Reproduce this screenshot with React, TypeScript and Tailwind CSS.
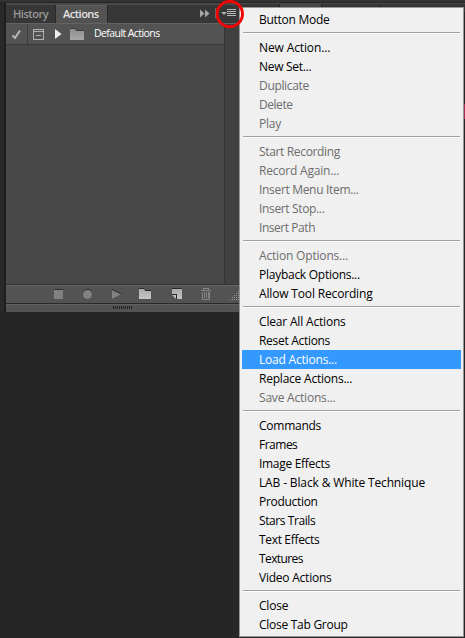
import React from "react";

type Item = { label: string; off?: boolean; active?: boolean; track: string };

const groups: Item[][] = [
  [{ label: "Button Mode", track: "tracking-[-0.27px]" }],
  [
    { label: "New Action...", track: "tracking-[-0.12px]" },
    { label: "New Set...", track: "tracking-[-0.3px]" },
    { label: "Duplicate", off: true, track: "tracking-[-0.33px]" },
    { label: "Delete", off: true, track: "tracking-[-0.45px]" },
    { label: "Play", off: true, track: "tracking-[-0.25px]" },
  ],
  [
    { label: "Start Recording", off: true, track: "tracking-[-0.34px]" },
    { label: "Record Again...", off: true, track: "tracking-[-0.2px]" },
    { label: "Insert Menu Item...", off: true, track: "tracking-[-0.32px]" },
    { label: "Insert Stop...", off: true, track: "tracking-[-0.35px]" },
    { label: "Insert Path", off: true, track: "tracking-[-0.45px]" },
  ],
  [
    { label: "Action Options...", off: true, track: "tracking-[-0.18px]" },
    { label: "Playback Options...", track: "tracking-[-0.26px]" },
    { label: "Allow Tool Recording", track: "tracking-[-0.16px]" },
  ],
  [
    { label: "Clear All Actions", track: "tracking-[-0.18px]" },
    { label: "Reset Actions", track: "tracking-[-0.3px]" },
    { label: "Load Actions...", active: true, track: "tracking-[-0.2px]" },
    { label: "Replace Actions...", track: "tracking-[-0.22px]" },
    { label: "Save Actions...", off: true, track: "tracking-[-0.2px]" },
  ],
  [
    { label: "Commands", track: "tracking-[-0.25px]" },
    { label: "Frames", track: "tracking-[-0.5px]" },
    { label: "Image Effects", track: "tracking-[-0.3px]" },
    { label: "LAB - Black & White Technique", track: "tracking-[-0.14px]" },
    { label: "Production", track: "tracking-[-0.3px]" },
    { label: "Stars Trails", track: "tracking-[-0.42px]" },
    { label: "Text Effects", track: "tracking-[-0.33px]" },
    { label: "Textures", track: "tracking-[-0.6px]" },
    { label: "Video Actions", track: "tracking-[-0.23px]" },
  ],
  [
    { label: "Close", track: "tracking-[-0.2px]" },
    { label: "Close Tab Group", track: "tracking-[-0.27px]" },
  ],
];

function Menu() {
  return (
    <div className="absolute left-[239px] top-[7px] h-[630px] w-[225px] border border-[#979797] bg-[#f0f0f0] px-[2px] pt-[2px] text-[12px] leading-[19px]">
      {groups.map((group, g) => (
        <div key={g}>
          {g > 0 && (
            <div className="flex h-[9px] flex-col px-px pt-[3px]">
              <div className="h-px bg-[#a0a0a0]" />
              <div className="h-px bg-white" />
            </div>
          )}
          {group.map((item) => (
            <div
              key={item.label}
              className={
                "h-[19px] whitespace-nowrap pl-[17px] " +
                item.track +
                (item.active
                  ? " bg-[#3399ff] text-white"
                  : item.off
                    ? " text-[#6d6d6d]"
                    : " text-black")
              }
            >
              {item.label}
            </div>
          ))}
        </div>
      ))}
    </div>
  );
}

function Folder({ className }: { className: string }) {
  return (
    <svg className={className} viewBox="0 0 14 12" shapeRendering="crispEdges">
      <path d="M0 1h5v1h1v1h8v9H0z" fill="url(#folder)" />
      <path d="M0 0h5v1H0zM6 2h8v1H6z" fill="#3a3a3a" />
    </svg>
  );
}

function Header() {
  return (
    <div className="flex h-[18px] bg-[#373737] text-[11px] font-semibold leading-[17px]">
      <div className="w-[50px] border-r border-[#292929] pl-[7px] tracking-[-0.45px] text-[#999999]">History</div>
      <div className="w-[51px] border-t border-[#606060] bg-[#535353] pl-[7px] leading-[15px] tracking-[-0.5px] text-[#e4e4e4]">
        Actions
      </div>
      <div className="flex flex-1 justify-end border-l border-[#292929]">
        <svg className="h-[18px] w-[40px]" viewBox="0 0 40 18">
          <path d="M1 4.5l4.5 4-4.5 4zM6 4.5l4.5 4-4.5 4z" fill="#a6a6a6" />
          <path d="M16.5 3v10" stroke="#696969" />
          <path d="M22 7h6l-3 3z" fill="#b0b0b0" />
          <path d="M28 4.5h9M28 6.5h9M28 8.5h9M28 10.5h9" stroke="#b8b8b8" shapeRendering="crispEdges" />
        </svg>
      </div>
    </div>
  );
}

function ActionRow() {
  return (
    <div className="flex h-[21px] w-[218px] items-center border-b border-[#383838] bg-[#535353]">
      <div className="flex h-full w-[22px] items-center justify-center border-r border-[#3b3b3b]">
        <svg className="h-[11px] w-[11px]" viewBox="0 0 11 11">
          <path d="M1.5 6.5l2.5 2.5 5-7.5" fill="none" stroke="#b9b9b9" strokeWidth="2" />
        </svg>
      </div>
      <svg className="ml-[5px] h-[11px] w-[11px]" viewBox="0 0 11 11" shapeRendering="crispEdges">
        <path d="M.5.5h10v10H.5zM1 2.5h9M3 6.5h5" fill="none" stroke="#b1b1b1" />
      </svg>
      <svg className="ml-[11px] h-[10px] w-[7px]" viewBox="0 0 7 10">
        <path d="M0 0l6.5 5L0 10z" fill="#eeeeee" />
      </svg>
      <Folder className="ml-[8px] h-[12px] w-[14px]" />
      <span className="ml-[10px] whitespace-nowrap text-[10.5px] tracking-[-0.58px] text-white">
        Default Actions
      </span>
    </div>
  );
}

function Footer() {
  return (
    <svg className="block h-[28px] w-[234px]" viewBox="0 0 234 28">
      <g shapeRendering="crispEdges">
        <path d="M0 0h234v28H0z" fill="#535353" />
        <path d="M0 0h234v1H0z" fill="#343434" />
        <path d="M0 1h234v1H0z" fill="#666666" />
        <path d="M0 19h234v1H0z" fill="#292929" />
        <path d="M0 20h234v1H0z" fill="#626262" />
        <path d="M48 6h9v9h-9z" fill="#818181" />
        <path d="M48 5h9v1h-9z" fill="#303030" />
      </g>
      <circle cx="81.5" cy="9.8" r="4.7" fill="#303030" />
      <circle cx="81.5" cy="10.5" r="4.5" fill="#818181" />
      <path d="M106 5l10 5-10 5z" fill="#303030" />
      <path d="M106 6l9 4.5-9 4.5z" fill="#818181" />
      <g shapeRendering="crispEdges">
        <path d="M133 5h5v1h1v1h6v8h-12z" fill="url(#metal)" />
        <path d="M133 4h5v1h-5zM139 6h6v1h-6z" fill="#292929" />
        <path d="M166 5h10v10h-5v-5h-5z" fill="url(#metal)" />
        <path d="M166 4h10v1h-10zM166 10h5v5h-1v-4h-4z" fill="#292929" />
      </g>
      <path d="M166 11l4 4v-4z" fill="#c0c0c0" />
      <path
        d="M195 6.5h10M197.5 6v-1.5h5V6M196.5 8v7h7V8M198.5 8v6M200.5 8v6M202 8v6"
        fill="none"
        stroke="#858585"
        strokeWidth="1"
        shapeRendering="crispEdges"
      />
      <path
        d="M232 7.5h1M230 9.5h1M232 9.5h1M228 11.5h1M230 11.5h1M232 11.5h1M226 13.5h1M228 13.5h1M230 13.5h1M232 13.5h1M224 15.5h1M226 15.5h1M228 15.5h1M230 15.5h1M232 15.5h1"
        stroke="#929292"
        shapeRendering="crispEdges"
      />
      <path d="M107 23.5h20" stroke="#222222" strokeWidth="3" strokeDasharray="1 1" shapeRendering="crispEdges" />
    </svg>
  );
}

export default function App() {
  return (
    <div className="relative h-[638px] w-[465px] overflow-hidden bg-[#262626] font-['Open_Sans','Noto_Sans',sans-serif]">
      <svg className="absolute h-0 w-0">
        <defs>
          <linearGradient id="metal" x1="0" y1="0" x2="0" y2="1">
            <stop stopColor="#aaaaaa" />
            <stop offset="1" stopColor="#c6c6c6" />
          </linearGradient>
          <linearGradient id="folder" x1="0" y1="0" x2="0" y2="1">
            <stop stopColor="#8e8e8e" />
            <stop offset="1" stopColor="#a8a8a8" />
          </linearGradient>
        </defs>
      </svg>
      <div className="h-[3px] border-b border-[#252525] bg-[#333333]" />
      <div className="flex h-[309px]">
        <div className="w-[5px] border-r border-[#1e1e1e] bg-[#292929]" />
        <div className="flex w-[234px] flex-col border-l border-[#1e1e1e] bg-[#484848] pt-[2px]">
          <Header />
          <div className="h-px bg-[#626262]" />
          <div className="flex flex-1">
            <div className="w-[218px] bg-[#484848]">
              <ActionRow />
            </div>
            <div className="flex-1 border-l border-[#353535] bg-[#404040]" />
          </div>
          <Footer />
        </div>
        <div className="flex h-[9px] flex-1 border-t border-[#4b4b4b] bg-[#353535]">
          <div className="w-[41px] border-r border-[#202020]" />
          <div className="w-[42px] border-r border-[#202020] bg-[#484848]" />
          <div className="w-[58px] border-r border-[#202020]" />
        </div>
      </div>
      <div className="absolute right-0 top-[104px] h-[15px] w-px bg-[#a62c55]" />
      <Menu />
      <svg className="absolute left-[215px] top-0 h-[29px] w-[30px]" viewBox="0 0 30 29">
        <circle cx="14.8" cy="14" r="12.7" fill="none" stroke="#f20505" strokeWidth="2.9" />
      </svg>
    </div>
  );
}
